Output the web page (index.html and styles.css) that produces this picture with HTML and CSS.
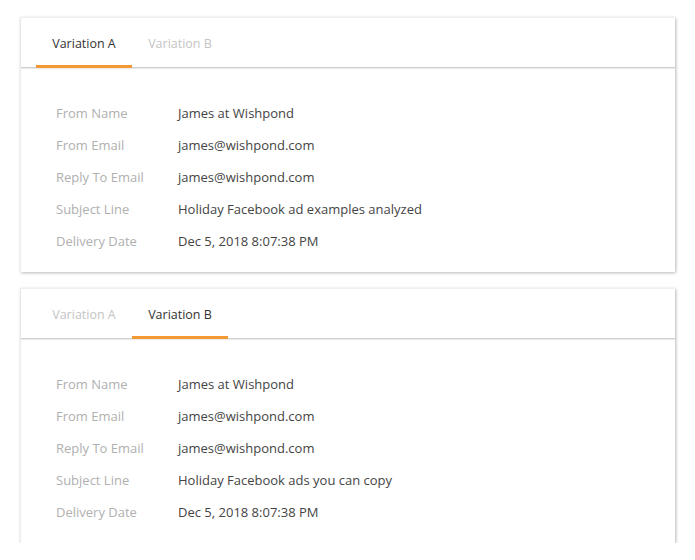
FILE: index.html
```html
<!DOCTYPE html>
<html>
<head>
<meta charset="utf-8">
<link rel="stylesheet" href="styles.css">
</head>
<body>
<div class="page">
  <section class="card">
    <div class="tabs">
      <div class="tab active">Variation A</div>
      <div class="tab">Variation B</div>
    </div>
    <div class="details">
      <div class="row"><span class="label">From Name</span><span class="value">James at Wishpond</span></div>
      <div class="row"><span class="label">From Email</span><span class="value">james@wishpond.com</span></div>
      <div class="row"><span class="label">Reply To Email</span><span class="value">james@wishpond.com</span></div>
      <div class="row"><span class="label">Subject Line</span><span class="value">Holiday Facebook ad examples analyzed</span></div>
      <div class="row"><span class="label">Delivery Date</span><span class="value">Dec 5, 2018 8:07:38 PM</span></div>
    </div>
  </section>
  <section class="card">
    <div class="tabs">
      <div class="tab">Variation A</div>
      <div class="tab active">Variation B</div>
    </div>
    <div class="details">
      <div class="row"><span class="label">From Name</span><span class="value">James at Wishpond</span></div>
      <div class="row"><span class="label">From Email</span><span class="value">james@wishpond.com</span></div>
      <div class="row"><span class="label">Reply To Email</span><span class="value">james@wishpond.com</span></div>
      <div class="row"><span class="label">Subject Line</span><span class="value">Holiday Facebook ads you can copy</span></div>
      <div class="row"><span class="label">Delivery Date</span><span class="value">Dec 5, 2018 8:07:38 PM</span></div>
    </div>
  </section>
</div>
</body>
</html>
```
FILE: styles.css
```css
html, body {
  margin: 0;
  padding: 0;
  background: #ffffff;
}
body {
  font-family: "Open Sans", "Noto Sans", sans-serif;
  font-size: 13px;
}
.page {
  padding: 17px 20px 0 20px;
  display: flex;
  flex-direction: column;
  gap: 16px;
}
.card {
  background: #fff;
  border-top: 1px solid #f0f0f0;
  border-left: 1px solid #ececec;
  box-shadow: 1px 1px 3px rgba(0,0,0,0.28);
}
.tabs {
  display: flex;
  height: 49px;
  padding-left: 15px;
  border-bottom: 1px solid #cfcfcf;
  box-shadow: 0 1px 1px rgba(0,0,0,0.08);
}
.tab {
  width: 96px;
  box-sizing: border-box;
  display: flex;
  align-items: center;
  justify-content: center;
  font-size: 12.5px;
  color: #c4c4c4;
  padding-top: 3px;
  border-bottom: 3px solid transparent;
  margin-bottom: -1px;
}
.tab.active {
  color: #333333;
  border-bottom-color: #f39a34;
  border-radius: 0 0 1px 1px;
}
.details {
  padding: 29px 0 15px 35px;
  display: flex;
  flex-direction: column;
}
.row {
  display: flex;
  height: 32px;
  align-items: center;
}
.label {
  width: 122px;
  color: #b0b0b0;
}
.value {
  color: #444444;
}
```
